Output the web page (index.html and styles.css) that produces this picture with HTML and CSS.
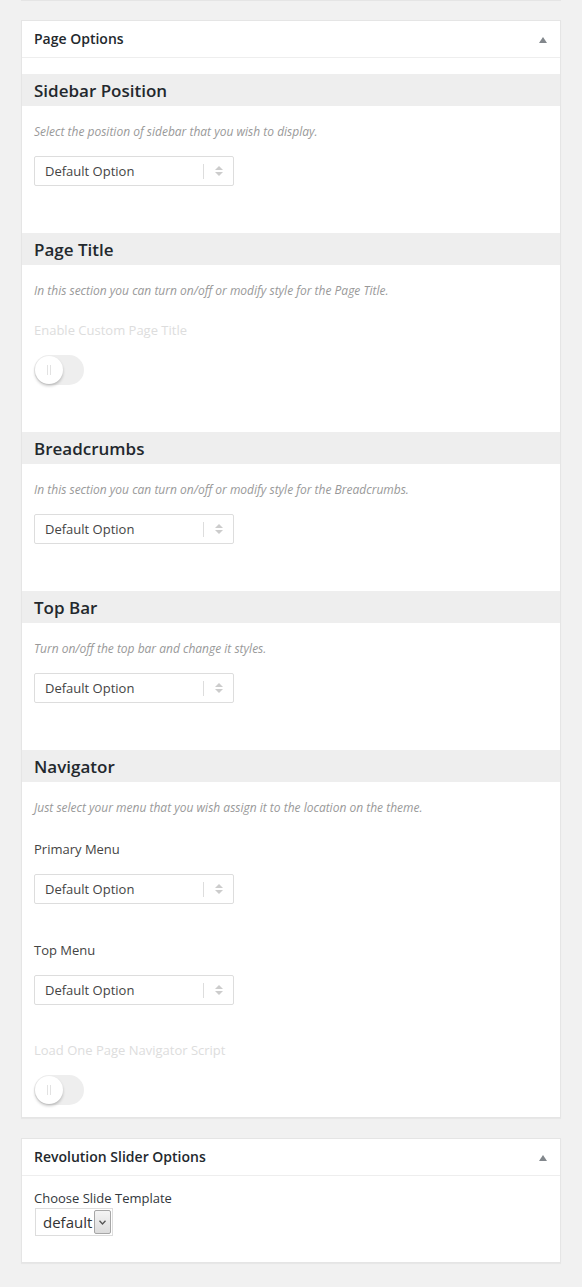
FILE: index.html
```html
<!DOCTYPE html>
<html lang="en">
<head>
<meta charset="utf-8">
<title>Page Options</title>
<link rel="stylesheet" href="styles.css">
</head>
<body>
<div class="wrap">
  <div class="prev-box"></div>

  <div class="postbox">
    <div class="postbox-head">
      <h2>Page Options</h2>
      <span class="caret"></span>
    </div>
    <div class="postbox-inside options">
      <div class="section">
        <h3 class="band">Sidebar Position</h3>
        <div class="section-body">
          <p class="desc">Select the position of sidebar that you wish to display.</p>
          <div class="field">
            <div class="select"><span class="select-text">Default Option</span><span class="select-sep"></span><span class="select-arrows"><i class="up"></i><i class="down"></i></span></div>
          </div>
        </div>
      </div>

      <div class="section">
        <h3 class="band">Page Title</h3>
        <div class="section-body">
          <p class="desc">In this section you can turn on/off or modify style for the Page Title.</p>
          <div class="field field-first">
            <div class="label label-disabled">Enable Custom Page Title</div>
            <div class="toggle"><span class="knob"></span></div>
          </div>
        </div>
      </div>

      <div class="section">
        <h3 class="band">Breadcrumbs</h3>
        <div class="section-body">
          <p class="desc">In this section you can turn on/off or modify style for the Breadcrumbs.</p>
          <div class="field">
            <div class="select"><span class="select-text">Default Option</span><span class="select-sep"></span><span class="select-arrows"><i class="up"></i><i class="down"></i></span></div>
          </div>
        </div>
      </div>

      <div class="section">
        <h3 class="band">Top Bar</h3>
        <div class="section-body">
          <p class="desc">Turn on/off the top bar and change it styles.</p>
          <div class="field">
            <div class="select"><span class="select-text">Default Option</span><span class="select-sep"></span><span class="select-arrows"><i class="up"></i><i class="down"></i></span></div>
          </div>
        </div>
      </div>

      <div class="section">
        <h3 class="band">Navigator</h3>
        <div class="section-body">
          <p class="desc">Just select your menu that you wish assign it to the location on the theme.</p>
          <div class="field field-first field-first-wide">
            <div class="label">Primary Menu</div>
            <div class="select"><span class="select-text">Default Option</span><span class="select-sep"></span><span class="select-arrows"><i class="up"></i><i class="down"></i></span></div>
          </div>
          <div class="field">
            <div class="label">Top Menu</div>
            <div class="select"><span class="select-text">Default Option</span><span class="select-sep"></span><span class="select-arrows"><i class="up"></i><i class="down"></i></span></div>
          </div>
          <div class="field field-last">
            <div class="label label-disabled">Load One Page Navigator Script</div>
            <div class="toggle"><span class="knob"></span></div>
          </div>
        </div>
      </div>
    </div>
  </div>

  <div class="postbox">
    <div class="postbox-head">
      <h2>Revolution Slider Options</h2>
      <span class="caret"></span>
    </div>
    <div class="postbox-inside slider-inside">
      <div class="plain-label">Choose Slide Template</div>
      <div class="native-select"><span class="native-text">default</span><span class="native-btn"><svg width="7" height="5" viewBox="0 0 7 5"><path d="M0.5 0.8 L3.5 4 L6.5 0.8" fill="none" stroke="#555" stroke-width="1.3"/></svg></span></div>
    </div>
  </div>
</div>
</body>
</html>
```

FILE: styles.css
```css
* { box-sizing: border-box; }

html, body {
  margin: 0;
  padding: 0;
  background: #f1f1f1;
}

body {
  font-family: "Open Sans", "Noto Sans", sans-serif;
  color: #444;
  font-size: 13px;
}

.wrap {
  width: 540px;
  margin-left: 21px;
}

.prev-box {
  height: 1px;
  background: #e5e5e5;
  margin-bottom: 19px;
}

.postbox {
  background: #fff;
  border: 1px solid #e5e5e5;
  box-shadow: 0 1px 1px rgba(0, 0, 0, 0.04);
  margin-bottom: 20px;
}

.postbox-head {
  height: 37px;
  border-bottom: 1px solid #eee;
  display: flex;
  align-items: center;
  justify-content: space-between;
  padding: 0 13px 0 12px;
}

.postbox-head h2 {
  margin: 0;
  font-size: 14px;
  font-weight: 600;
  color: #23282d;
  line-height: 1.4;
}

.caret {
  width: 0;
  height: 0;
  border-left: 4px solid transparent;
  border-right: 4px solid transparent;
  border-bottom: 6px solid #82878c;
  margin-top: 1px;
}

.options {
  padding-top: 16px;
}

.section + .section {
  margin-top: 35px;
}

.band {
  margin: 0;
  height: 32px;
  background: #eee;
  padding: 0 12px;
  display: flex;
  align-items: center;
  font-size: 17px;
  font-weight: 600;
  color: #23282d;
}

.section-body {
  padding: 17px 12px 12px;
}

.desc {
  margin: 0 0 15px;
  font-size: 12px;
  font-style: italic;
  color: #999;
  line-height: 18px;
}

.field + .field {
  margin-top: 36px;
}

.field + .field-last {
  margin-top: 35px;
}

.desc + .field-first {
  margin-top: 20px;
}

.desc + .field-first-wide {
  margin-top: 22px;
}

.label {
  font-size: 13px;
  line-height: 20px;
  color: #444;
  margin-bottom: 15px;
}

.label-disabled {
  color: #ddd;
}

.select {
  width: 200px;
  height: 30px;
  border: 1px solid #ddd;
  border-radius: 2px;
  display: flex;
  align-items: center;
  padding-left: 10px;
  background: #fff;
}

.select-text {
  flex: 1;
  font-size: 13px;
  color: #444;
}

.select-sep {
  width: 1px;
  height: 15px;
  background: #ddd;
}

.select-arrows {
  width: 29px;
  display: flex;
  flex-direction: column;
  align-items: center;
  gap: 2px;
}

.select-arrows i {
  display: block;
  width: 0;
  height: 0;
  border-left: 4px solid transparent;
  border-right: 4px solid transparent;
}

.select-arrows .up {
  border-bottom: 4px solid #ccc;
}

.select-arrows .down {
  border-top: 4px solid #ccc;
}

.toggle {
  width: 50px;
  height: 30px;
  border-radius: 15px;
  background: #eee;
  position: relative;
}

.knob {
  position: absolute;
  left: 1px;
  top: 1px;
  width: 28px;
  height: 28px;
  border-radius: 50%;
  background: #fff;
  box-shadow: 0 2px 3px rgba(0, 0, 0, 0.22);
}

.knob::before,
.knob::after {
  content: "";
  position: absolute;
  top: 9px;
  width: 1px;
  height: 10px;
  background: #e2e2e2;
}

.knob::before { left: 12px; }
.knob::after { left: 15px; }

.slider-inside {
  padding: 12px 12px 26px;
}

.plain-label {
  font-size: 13px;
  line-height: 20px;
  color: #32373c;
}

.native-select {
  width: 78px;
  height: 28px;
  border: 1px solid #ddd;
  display: flex;
  align-items: stretch;
  padding: 1px 1px 1px 1px;
  margin-left: 1px;
}

.native-text {
  flex: 1;
  font-size: 15px;
  line-height: 24px;
  color: #333;
  padding-left: 6px;
}

.native-btn {
  width: 17px;
  border: 1px solid #a6a6a6;
  border-radius: 2px;
  background: linear-gradient(#f4f4f4, #dcdcdc);
  display: flex;
  align-items: center;
  justify-content: center;
}
```
